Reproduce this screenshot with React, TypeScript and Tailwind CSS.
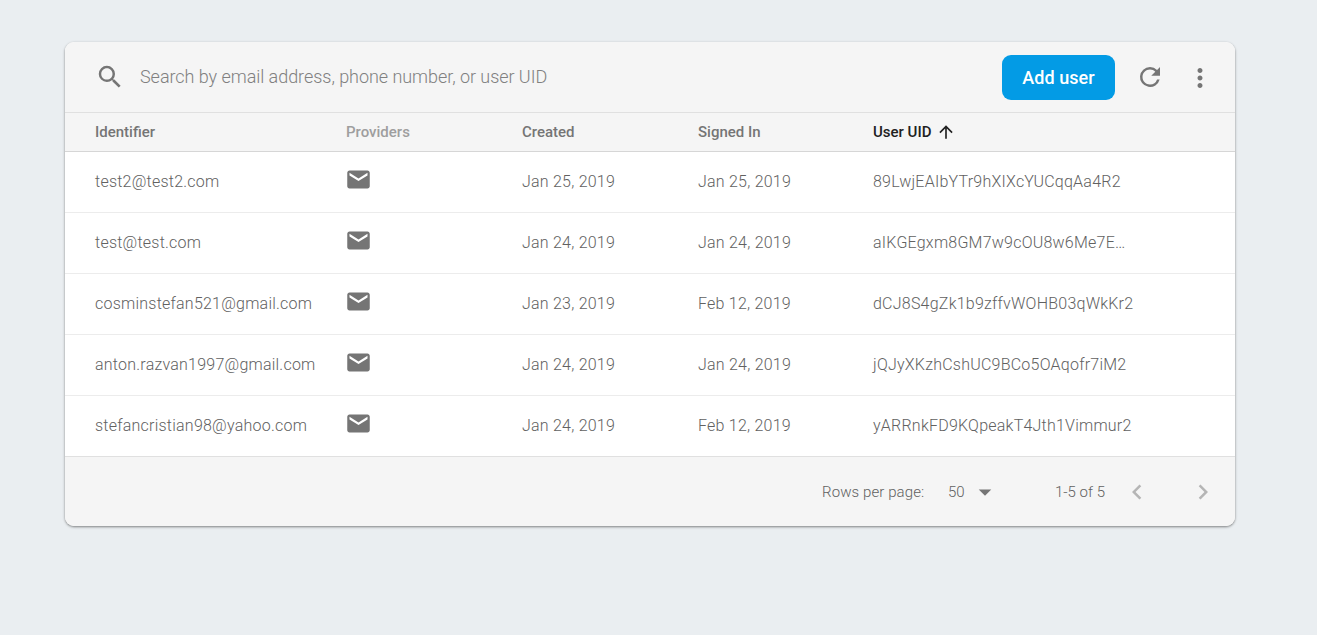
import type { ReactNode } from 'react';

type User = { id: string; created: string; signedIn: string; uid: string };

const users: User[] = [
  { id: 'test2@test2.com', created: 'Jan 25, 2019', signedIn: 'Jan 25, 2019', uid: '89LwjEAIbYTr9hXIXcYUCqqAa4R2' },
  { id: 'test@test.com', created: 'Jan 24, 2019', signedIn: 'Jan 24, 2019', uid: 'aIKGEgxm8GM7w9cOU8w6Me7E…' },
  { id: 'cosminstefan521@gmail.com', created: 'Jan 23, 2019', signedIn: 'Feb 12, 2019', uid: 'dCJ8S4gZk1b9zffvWOHB03qWkKr2' },
  { id: 'anton.razvan1997@gmail.com', created: 'Jan 24, 2019', signedIn: 'Jan 24, 2019', uid: 'jQJyXKzhCshUC9BCo5OAqofr7iM2' },
  { id: 'stefancristian98@yahoo.com', created: 'Jan 24, 2019', signedIn: 'Feb 12, 2019', uid: 'yARRnkFD9KQpeakT4Jth1Vimmur2' },
];

function Icon({ className, children }: { className: string; children: ReactNode }) {
  return (
    <svg viewBox="0 0 24 24" fill="currentColor" className={`block shrink-0 ${className}`}>
      {children}
    </svg>
  );
}

const grid = 'grid grid-cols-[251px_176px_176px_175px_1fr] items-center pl-[30px]';

export default function App() {
  return (
    <div className="flex h-[635px] items-start bg-[#eaeef1] pl-[65px] pt-[42px] font-['Roboto',sans-serif] text-[#757575]">
      <div className="w-[1170px] overflow-hidden rounded-[9px] bg-white shadow-[0_1px_3px_rgba(0,0,0,0.3),0_1px_2px_rgba(0,0,0,0.2)]">
        <div className="flex h-[71px] items-center border-b border-[#e0e0e0] bg-[#f5f5f5] pl-[30px] pr-[20px]">
          <Icon className="size-[30px]">
            <path d="M15.5 14h-.79l-.28-.27A6.471 6.471 0 0 0 16 9.5 6.5 6.5 0 1 0 9.5 16c1.61 0 3.09-.59 4.23-1.57l.27.28v.79l5 4.99L20.49 19l-4.99-5zm-6 0C7.01 14 5 11.99 5 9.5S7.01 5 9.5 5 14 7.01 14 9.5 11.99 14 9.5 14z" />
          </Icon>
          <span className="ml-[15px] -mt-[2px] text-[18px] font-light tracking-[-0.045px] text-[#808080]">Search by email address, phone number, or user UID</span>
          <button className="ml-auto h-[45px] w-[113px] rounded-[9px] bg-[#039be5] text-[18px] font-medium tracking-[0.05px] text-white">Add user</button>
          <Icon className="ml-[20px] size-[30px]">
            <path d="M17.65 6.35A7.958 7.958 0 0 0 12 4a8 8 0 1 0 7.73 10h-2.08A5.99 5.99 0 0 1 12 18c-3.31 0-6-2.69-6-6s2.69-6 6-6c1.66 0 3.14.69 4.22 1.78L13 11h7V4l-2.35 2.35z" />
          </Icon>
          <Icon className="ml-[20px] mt-px size-[30px]">
            <path d="M12 8c1.1 0 2-.9 2-2s-.9-2-2-2-2 .9-2 2 .9 2 2 2zm0 2c-1.1 0-2 .9-2 2s.9 2 2 2 2-.9 2-2-.9-2-2-2zm0 6c-1.1 0-2 .9-2 2s.9 2 2 2 2-.9 2-2-.9-2-2-2z" />
          </Icon>
        </div>
        <div className={`${grid} h-[39px] border-b border-[#d6d6d6] bg-[#f5f5f5] text-[15px] font-medium`}>
          <span>Identifier</span>
          <span className="text-[#9e9e9e]">Providers</span>
          <span>Created</span>
          <span>Signed In</span>
          <span className="flex items-center gap-[5px] text-[#212121]">
            User UID
            <Icon className="size-[20px]">
              <path d="M4 12l1.41 1.41L11 7.83V20h2V7.83l5.58 5.59L20 12l-8-8-8 8z" />
            </Icon>
          </span>
        </div>
        {users.map((u) => (
          <div key={u.id} className={`${grid} h-[61px] border-b border-[#ececec] text-[16px] font-light tracking-[0.23px] text-[#616161] nth-last-2:border-[#e0e0e0]`}>
            <span>{u.id}</span>
            <Icon className="-ml-px -mt-[5px] size-[27px] text-[#757575]">
              <path d="M20 4H4c-1.1 0-1.99.9-1.99 2L2 18c0 1.1.9 2 2 2h16c1.1 0 2-.9 2-2V6c0-1.1-.9-2-2-2zm0 4.4l-8 5-8-5V6l8 5 8-5v2.4z" />
            </Icon>
            <span>{u.created}</span>
            <span>{u.signedIn}</span>
            <span>{u.uid}</span>
          </div>
        ))}
        <div className="flex h-[69px] items-center bg-[#f5f5f5] pl-[757px] text-[15px] font-light text-[#616161]">
          <span className="w-[126px] pt-[2px] tracking-[0.1px]">Rows per page:</span>
          <span className="w-[22px] pt-[2px]">50</span>
          <Icon className="size-[30px] text-[#757575]">
            <path d="M7 10l5 5 5-5z" />
          </Icon>
          <span className="ml-[55px] w-[67px] pt-[2px]">1-5 of 5</span>
          <Icon className="size-[30px] text-[#b5b5b5]">
            <path d="M15.41 7.41L14 6l-6 6 6 6 1.41-1.41L10.83 12z" />
          </Icon>
          <Icon className="ml-[36px] size-[30px] text-[#b5b5b5]">
            <path d="M10 6L8.59 7.41 13.17 12l-4.58 4.59L10 18l6-6z" />
          </Icon>
        </div>
      </div>
    </div>
  );
}
